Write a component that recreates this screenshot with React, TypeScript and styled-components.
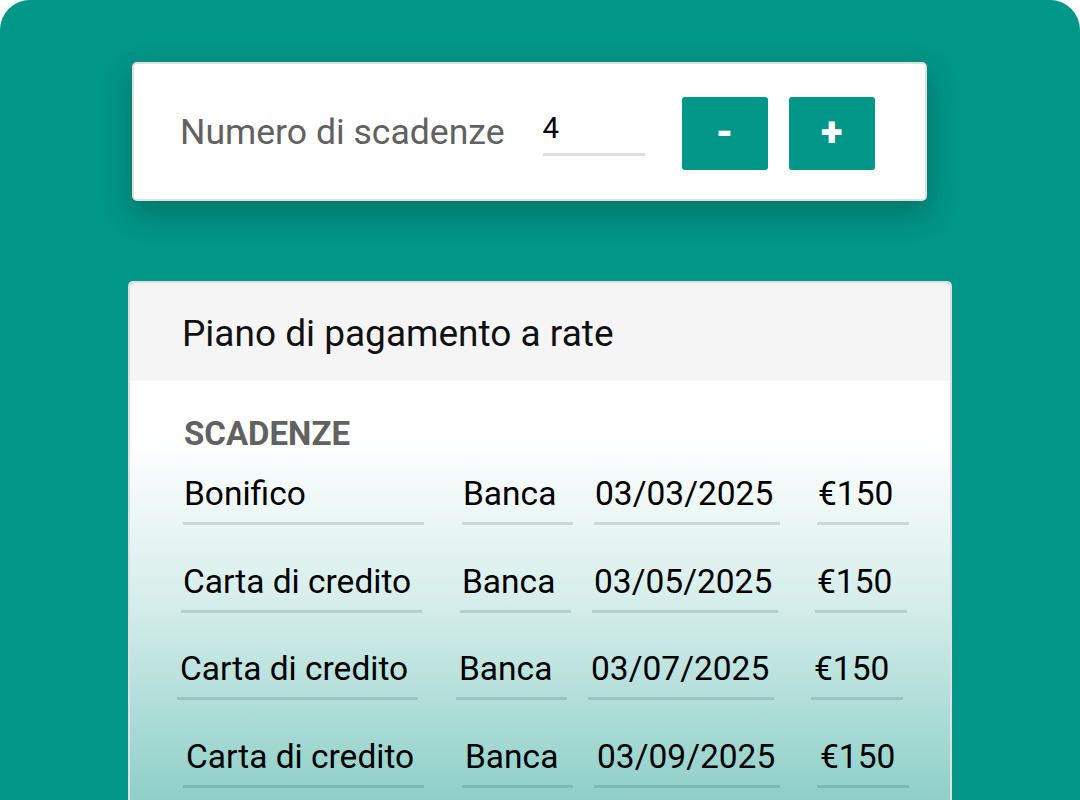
import React from 'react';
import styled, { createGlobalStyle } from 'styled-components';

const colors = {
  teal: '#009688',
  label: '#616161',
  border: '#e0e0e0',
  header: '#f5f5f5',
};

const GlobalStyle = createGlobalStyle`
  html, body {
    margin: 0;
    padding: 0;
    background: #ffffff;
  }
  body {
    font-family: Roboto, 'Noto Sans', 'Liberation Sans', sans-serif;
  }
`;

const Frame = styled.div`
  width: 1080px;
  height: 800px;
  background: ${colors.teal};
  border-radius: 30px 30px 0 0;
  overflow: hidden;
  box-sizing: border-box;
  padding: 62px 0 0 128px;
  display: flex;
  flex-direction: column;
  gap: 80px;
`;

const CounterCard = styled.div`
  flex-shrink: 0;
  margin-left: 4px;
  width: 795px;
  height: 139px;
  box-sizing: border-box;
  background: #ffffff;
  border: 2px solid ${colors.border};
  border-radius: 5px;
  box-shadow: 0 12px 30px rgba(0, 40, 35, 0.32);
  display: flex;
  align-items: center;
  padding-left: 46px;
`;

const CounterLabel = styled.span`
  font-size: 35.6px;
  color: ${colors.label};
  margin-right: 38px;
  white-space: nowrap;
`;

const CounterInput = styled.div`
  width: 102px;
  box-sizing: border-box;
  font-size: 29.5px;
  line-height: 34px;
  color: #000;
  padding-bottom: 8px;
  border-bottom: 3px solid ${colors.border};
  margin: 4px 37px 0 0;
`;

const StepButton = styled.button`
  width: 86px;
  height: 73px;
  margin-top: 4px;
  border: none;
  border-radius: 3px;
  background: ${colors.teal};
  color: #ffffff;
  font-family: Roboto, 'Liberation Sans', sans-serif;
  font-weight: 900;
  font-size: 40px;
  line-height: 1;
  display: flex;
  align-items: center;
  justify-content: center;
  padding: 0 0 2px 0;
  & + & {
    margin-left: 21px;
  }
`;

const PlanCard = styled.div`
  width: 824px;
  flex-shrink: 0;
  height: 560px;
  box-sizing: border-box;
  border: 2px solid ${colors.border};
  border-bottom: none;
  border-radius: 5px 5px 0 0;
  overflow: hidden;
  display: flex;
  flex-direction: column;
`;

const PlanHeader = styled.div`
  height: 98px;
  box-sizing: border-box;
  padding: 3px 0 0 52px;
  background: ${colors.header};
  display: flex;
  align-items: center;
  font-size: 37px;
  color: #111;
`;

const PlanBody = styled.div`
  flex: 1;
  background: linear-gradient(
    180deg,
    #ffffff 0px,
    #ffffff 58px,
    #d6eeeb 220px,
    #8ecfc8 420px
  );
  padding: 33px 0 0 54px;
`;

const SectionTitle = styled.div`
  font-size: 33px;
  font-weight: 700;
  color: ${colors.label};
  margin-bottom: 21px;
`;

const Row = styled.div<{ $shift: number; $inset: number }>`
  display: flex;
  margin-left: ${(p) => p.$shift}px;
  margin-bottom: 36.5px;
  & > * {
    padding-left: ${(p) => p.$inset}px;
  }
`;

const Field = styled.div<{ $width: number; $gap: number }>`
  width: ${(p) => p.$width}px;
  margin-left: ${(p) => p.$gap}px;
  box-sizing: border-box;
  font-size: 33.5px;
  line-height: 40px;
  color: #000;
  padding-bottom: 8px;
  border-bottom: 3px solid rgba(0, 60, 55, 0.15);
  white-space: nowrap;
`;

const rows = [
  { method: 'Bonifico', date: '03/03/2025', shift: -1, inset: 1 },
  { method: 'Carta di credito', date: '03/05/2025', shift: -3, inset: 2 },
  { method: 'Carta di credito', date: '03/07/2025', shift: -7, inset: 3 },
  { method: 'Carta di credito', date: '03/09/2025', shift: -1, inset: 3 },
];

export default function App() {
  return (
    <>
      <GlobalStyle />
      <Frame>
        <CounterCard>
          <CounterLabel>Numero di scadenze</CounterLabel>
          <CounterInput>4</CounterInput>
          <StepButton>-</StepButton>
          <StepButton>+</StepButton>
        </CounterCard>
        <PlanCard>
          <PlanHeader>Piano di pagamento a rate</PlanHeader>
          <PlanBody>
            <SectionTitle>SCADENZE</SectionTitle>
            {rows.map((r, i) => (
              <Row key={i} $shift={r.shift} $inset={r.inset}>
                <Field $width={241} $gap={0}>{r.method}</Field>
                <Field $width={111} $gap={38}>Banca</Field>
                <Field $width={186} $gap={21}>{r.date}</Field>
                <Field $width={92} $gap={37}>€150</Field>
              </Row>
            ))}
          </PlanBody>
        </PlanCard>
      </Frame>
    </>
  );
}
